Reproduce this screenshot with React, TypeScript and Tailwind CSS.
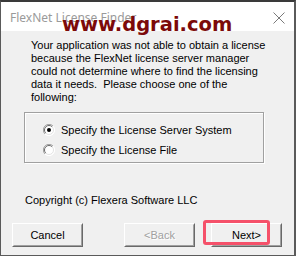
import React from 'react'

function Radio({ checked }: { checked: boolean }) {
  return (
    <svg width="12" height="12" viewBox="0 0 12 12" className="shrink-0">
      <circle cx="6" cy="6" r="5.5" fill="#ffffff" />
      <path d="M10 2 A5.5 5.5 0 0 0 2 10" fill="none" stroke="#a0a0a0" strokeWidth="1" />
      <path d="M9.2 2.8 A4.5 4.5 0 0 0 2.8 9.2" fill="none" stroke="#696969" strokeWidth="1" />
      <path d="M2 10 A5.5 5.5 0 0 0 10 2" fill="none" stroke="#ffffff" strokeWidth="1" />
      <path d="M2.8 9.2 A4.5 4.5 0 0 0 9.2 2.8" fill="none" stroke="#e3e3e3" strokeWidth="1" />
      {checked && <circle cx="6" cy="6" r="2" fill="#000000" />}
    </svg>
  )
}

function ClassicButton({ label, disabled, width }: { label: string; disabled?: boolean; width: string }) {
  return (
    <div
      className={`${width} h-[24px] border border-t-white border-l-white border-r-[#696969] border-b-[#696969] bg-[#f0f0f0]`}
    >
      <div className="w-full h-full border border-t-[#f0f0f0] border-l-[#f0f0f0] border-r-[#a0a0a0] border-b-[#a0a0a0] flex items-center justify-center">
        <span
          className={
            disabled
              ? 'text-[#a0a0a0] [text-shadow:1px_1px_0_#ffffff]'
              : 'text-black'
          }
        >
          {label}
        </span>
      </div>
    </div>
  )
}

export default function App() {
  return (
    <div className="relative w-[296px] h-[256px] overflow-hidden bg-[#f0f0f0] font-['Liberation_Sans',Arial,sans-serif] text-[11px] leading-[13px] text-black">
      <div className="flex flex-col w-full h-full border-t-2 border-t-[#3a3a3a] border-l border-l-[#5a5a5a] border-r-2 border-r-[#5a5a5a] border-b border-b-[#5a5a5a]">
        {/* title bar */}
        <div className="h-[29px] bg-white flex items-center justify-between pl-[9px] pr-[9px]">
          <span className="font-['Noto_Sans',sans-serif] text-[12px] text-[#9a9a9a] mt-[1px]">
            FlexNet License Finder
          </span>
          <svg width="12" height="12" viewBox="0 0 12 12" className="mt-[2px]">
            <path d="M0.5 0.5 L11.5 11.5 M11.5 0.5 L0.5 11.5" stroke="#7a7a7a" strokeWidth="1" />
          </svg>
        </div>

        {/* body */}
        <div className="flex flex-col flex-1">
          <p className="mt-[8px] ml-[30px] w-[240px]">
            Your application was not able to obtain a license because the FlexNet license server manager
            could not determine where to find the licensing data it needs.&nbsp; Please choose one of the
            following:
          </p>

          <div className="mt-[8px] ml-[23px] w-[240px] h-[51px] border border-[#a0a0a0] shadow-[inset_1px_1px_0_#ffffff,1px_1px_0_#ffffff] pt-[7px] pl-[18px] flex flex-col">
            <div className="h-[20px] flex items-center gap-[6px]">
              <Radio checked />
              <span>Specify the License Server System</span>
            </div>
            <div className="h-[20px] flex items-center gap-[6px]">
              <Radio checked={false} />
              <span>Specify the License File</span>
            </div>
          </div>

          <p className="mt-[31px] ml-[24px]">Copyright (c) Flexera Software LLC</p>

          <div className="mt-[16px] ml-[11px] flex">
            <ClassicButton label="Cancel" width="w-[71px]" />
            <div className="ml-[41px]">
              <ClassicButton label="<Back" disabled width="w-[71px]" />
            </div>
            <div className="ml-[16px]">
              <ClassicButton label="Next>" width="w-[71px]" />
            </div>
          </div>
        </div>
      </div>

      {/* highlight around Next */}
      <div className="absolute left-[203px] top-[220px] w-[67px] h-[25px] border-[3px] border-[#f5516a] rounded-[3px]" />

      {/* watermark */}
      <div className="absolute left-[62px] top-[13px] font-['DejaVu_Sans',sans-serif] font-bold text-[19.5px] leading-[24px] text-[#7c0a0a]">
        www.dgrai.com
      </div>
    </div>
  )
}
